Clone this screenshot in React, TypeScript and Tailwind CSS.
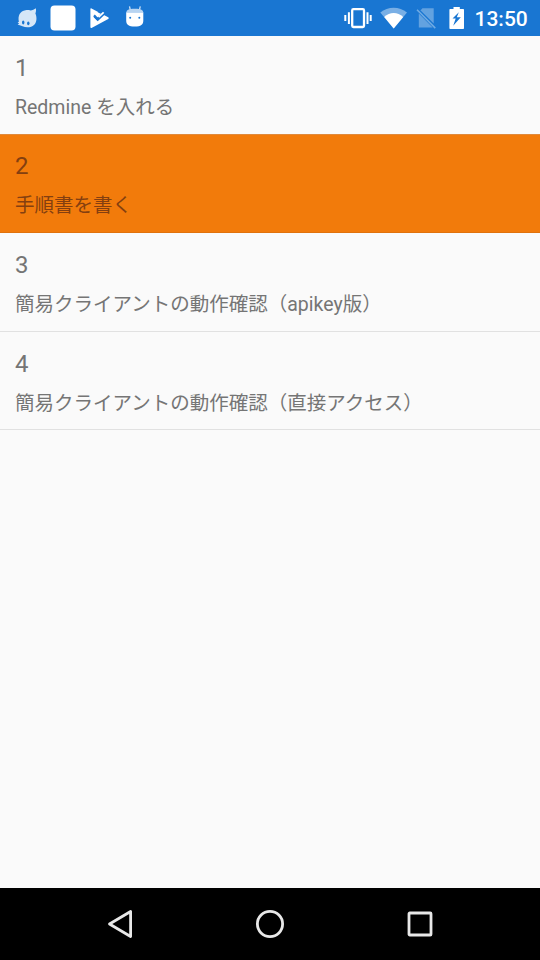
import React from "react";

type Item = { id: number; title: string; row: string; text: string };

const items: Item[] = [
  { id: 1, title: "Redmine を入れる", row: "h-[98px] bg-[#fafafa]", text: "text-[#757575]" },
  { id: 2, title: "手順書を書く", row: "h-[99px] bg-[#f27b0b] border-y border-t-[#e08a3c] border-b-[#e0720c]", text: "text-[#843f10]" },
  { id: 3, title: "簡易クライアントの動作確認（apikey版）", row: "h-[99px] bg-[#fafafa] border-b border-[#e1e1e1]", text: "text-[#757575]" },
  { id: 4, title: "簡易クライアントの動作確認（直接アクセス）", row: "h-[98px] bg-[#fafafa] border-b border-[#e1e1e1]", text: "text-[#757575]" },
];

function StatusBar() {
  return (
    <header className="relative h-9 shrink-0 bg-[#1976d2]">
      <svg className="block" width="540" height="36" viewBox="0 0 540 36" fill="#fff">
        <path d="M35.800 8.200c.5 2 .2 3.800-.4 5.200 1.800 4 1.400 9-1.400 11.600-2.500 2.600-8 3.100-11.500 1.200l-4.900-1.600 1.500-1.100-1.500-1.300 1.300-.5C17.600 16 20 11 25.500 10.300c1.800-.3 3.500-.2 4.800.1 2.200-.3 4-1 5.500-2.200z" fill="#d5e6f7" />
        <ellipse cx="23.200" cy="22.500" rx="1.200" ry="2" fill="#1976d2" />
        <ellipse cx="28.300" cy="23.300" rx="1.200" ry="1.900" fill="#1976d2" />
        <rect x="50.500" y="5.500" width="25" height="25" rx="4" />
        <path d="M91.500 8.500L108.200 17.200c.8.500.8 1.200 0 1.700L92 27.700c-1 .5-1.600.2-1.600-.8V9.200c0-.8.4-1.100 1.100-.7z" />
        <path d="M94 15.400l3.500 3.600 7.500-7.700" fill="none" stroke="#1976d2" strokeWidth="2.300" />
        <path d="M97.500 12l3 1.800L104 10.300l-2-1z" fill="#1976d2" />
        <path d="M99.300 15.200l4.600-4.500 1.500 1.500-3 3z" fill="#1976d2" />
        <path d="M98 16.600l5-4.800 1.400 1.300-5 4.800z" />
        <path d="M94.200 16.700l3.500 3.500 7.200-6.700" fill="none" stroke="#1976d2" strokeWidth="1.500" />
        <path d="M126.200 12.300h17.100v8.200c0 4.300-2.300 6-8.500 6s-8.600-1.700-8.600-6z" />
        <path d="M126.400 12.500c.2-2.600 1.800-3.700 8.400-3.700s8.100 1.100 8.400 3.700z" fill="#b8d4f1" />
        <path d="M129.500 6.300l.7 3.200M140.300 6.300l-.8 3.200" stroke="#c9dff5" strokeWidth="1.300" />
        <circle cx="130.200" cy="17.700" r="1" fill="#1976d2" />
        <circle cx="139.300" cy="17.700" r="1" fill="#1976d2" />
        <rect x="352.200" y="9.200" width="11.800" height="17.800" rx="1.200" fill="none" stroke="#fff" strokeWidth="2.300" />
        <path d="M344.300 15h2v6h-2zM347.900 12.300h2v11.700h-2zM366.500 12.300h2v11.700h-2zM369.700 15h2v6h-2z" />
        <path d="M380.300 12.500c7.500-6.500 19.200-6.500 26.700 0L393.700 28.500z" opacity=".42" />
        <path d="M384.200 17c5.600-5.500 13.400-5.500 19 0l-9.500 11.500z" />
        <path d="M418.800 12.200l3.700-3.900h11.200v15.200L420.600 10.500zM418.800 13.500l13.900 13.900h-13.900z" opacity=".32" />
        <path d="M417 9.700l18.300 18.400" stroke="#70abe3" strokeWidth="1.500" />
        <path fillRule="evenodd" d="M453.500 7h6.300v2h3.200c.6 0 1 .4 1 1v18c0 .6-.4 1-1 1h-12.600c-.6 0-1-.4-1-1V10c0-.6.400-1 1-1h3.100zM458.800 12.300l-6.300 6.200h3.200l-2.500 7.300 7.600-8.500h-4z" />
      </svg>
      <span className="absolute left-[474.500px] top-[7px] text-[21px] leading-[24px] font-medium text-white">13:50</span>
    </header>
  );
}

function ListRow({ item }: { item: Item }) {
  return (
    <li className={`${item.row} ${item.text} ${item.id === 2 ? "pt-[17px]" : "pt-[18px]"} shrink-0 px-[15px]`}>
      <div className="text-[24px] leading-[29px]">{item.id}</div>
      <div className="mt-[11px] text-[19.5px] leading-[28px] whitespace-nowrap">{item.title}</div>
    </li>
  );
}

function NavigationBar() {
  return (
    <nav className="flex h-[72px] shrink-0 items-center justify-center gap-[114px] bg-black">
      <svg width="36" height="36" viewBox="0 0 36 36" fill="none" stroke="#e8e8e8" strokeWidth="2.800" strokeLinejoin="round">
        <path d="M7.500 18L28.600 5.500v25z" />
      </svg>
      <svg width="36" height="36" viewBox="0 0 36 36" fill="none" stroke="#e8e8e8" strokeWidth="2.800">
        <circle cx="18" cy="18" r="12.600" />
      </svg>
      <svg width="36" height="36" viewBox="0 0 36 36" fill="none" stroke="#e8e8e8" strokeWidth="2.800">
        <rect x="7" y="7" width="22" height="22" rx=".8" />
      </svg>
    </nav>
  );
}

export default function App() {
  return (
    <div className="flex h-[960px] w-[540px] flex-col overflow-hidden bg-[#fafafa] font-[Roboto,'Noto_Sans_CJK_JP',sans-serif]">
      <StatusBar />
      <main className="flex-1">
        <ul className="flex flex-col">
          {items.map((item) => (
            <ListRow key={item.id} item={item} />
          ))}
        </ul>
      </main>
      <NavigationBar />
    </div>
  );
}
